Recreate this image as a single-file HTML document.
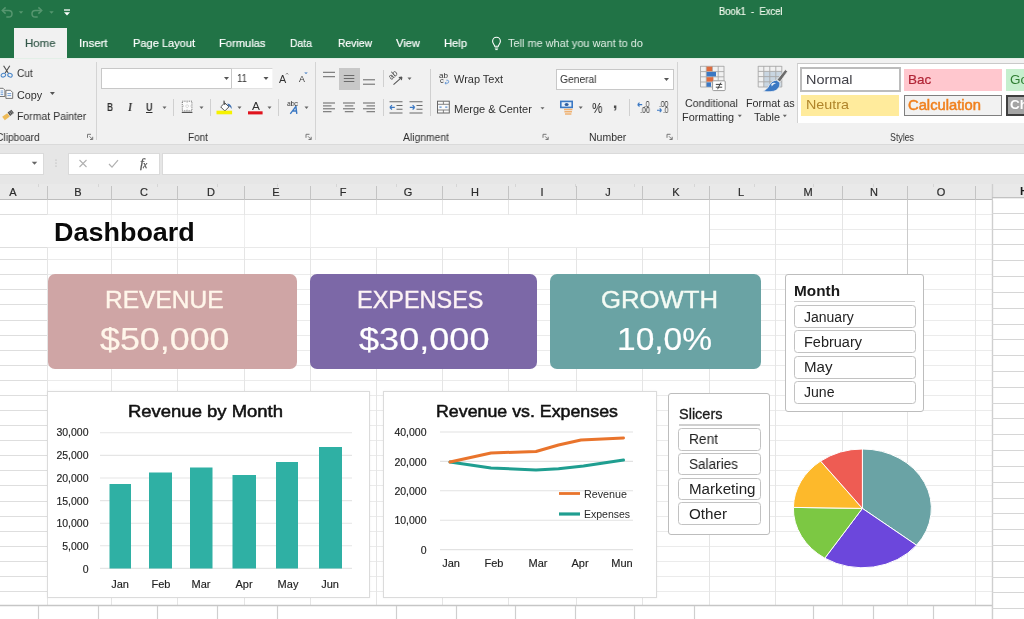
<!DOCTYPE html>
<html lang="en">
<head>
<meta charset="utf-8">
<title>Book1 - Excel</title>
<style>
html,body{margin:0;padding:0;background:#fff;}
body{width:1024px;height:619px;overflow:hidden;font-family:"Liberation Sans",sans-serif;}
#app{position:relative;width:1024px;height:619px;overflow:hidden;background:#fff;}
#app div,#app span,#app svg{position:absolute;box-sizing:border-box;}
.t{white-space:pre;transform-origin:0 50%;will-change:transform;}
.hdr{left:0;top:0;width:1024px;height:58px;background:#217346;}
.tab{left:14px;top:28.4px;width:52.6px;height:31px;background:#f1f1f1;}
.rib{left:0;top:58px;width:1024px;height:87px;background:#f1f1f1;border-top:1px solid #e3efe7;}
.fbar{left:0;top:144px;width:1024px;height:56px;background:#e6e6e6;border-top:1px solid #dadada;}
.wbox{background:#fff;border:1px solid #c8c8c8;}
.vsep{width:1px;background:#d4d4d4;}
.colh{left:0;top:184px;width:1024px;height:16px;background:#e9e9e9;border-bottom:1px solid #bdbdbd;}
.card{border-radius:7px;}
.chart{background:#fff;border:1px solid #dbdbdb;box-shadow:0 0 2px rgba(0,0,0,.06);}
.slc{background:#fff;border:1px solid #bdbdbd;border-radius:3px;}
.sli{background:#fff;border:1px solid #c2c2c2;border-radius:3.5px;}

</style>
</head>
<body>
<div id="app">
<div class="hdr"></div>
<div class="tab"></div>
<div class="rib"></div>
<div class="fbar"></div>
<div class="colh"></div>
<svg style="left:0;top:0" width="1024" height="619" viewBox="0 0 1024 619"><line x1="0" y1="214.5" x2="47.5" y2="214.5" stroke="#dedede" stroke-width="1"/><line x1="47.5" y1="214.5" x2="992" y2="214.5" stroke="#ebebeb" stroke-width="1"/><line x1="0" y1="229.5" x2="47.5" y2="229.5" stroke="#dedede" stroke-width="1"/><line x1="47.5" y1="229.5" x2="992" y2="229.5" stroke="#ebebeb" stroke-width="1"/><line x1="0" y1="244.5" x2="47.5" y2="244.5" stroke="#dedede" stroke-width="1"/><line x1="47.5" y1="244.5" x2="992" y2="244.5" stroke="#ebebeb" stroke-width="1"/><line x1="0" y1="259.5" x2="47.5" y2="259.5" stroke="#dedede" stroke-width="1"/><line x1="47.5" y1="259.5" x2="992" y2="259.5" stroke="#ebebeb" stroke-width="1"/><line x1="0" y1="274.5" x2="47.5" y2="274.5" stroke="#dedede" stroke-width="1"/><line x1="47.5" y1="274.5" x2="992" y2="274.5" stroke="#ebebeb" stroke-width="1"/><line x1="0" y1="289.5" x2="47.5" y2="289.5" stroke="#dedede" stroke-width="1"/><line x1="47.5" y1="289.5" x2="992" y2="289.5" stroke="#ebebeb" stroke-width="1"/><line x1="0" y1="304.5" x2="47.5" y2="304.5" stroke="#dedede" stroke-width="1"/><line x1="47.5" y1="304.5" x2="992" y2="304.5" stroke="#ebebeb" stroke-width="1"/><line x1="0" y1="320.5" x2="47.5" y2="320.5" stroke="#dedede" stroke-width="1"/><line x1="47.5" y1="320.5" x2="992" y2="320.5" stroke="#ebebeb" stroke-width="1"/><line x1="0" y1="335.5" x2="47.5" y2="335.5" stroke="#dedede" stroke-width="1"/><line x1="47.5" y1="335.5" x2="992" y2="335.5" stroke="#ebebeb" stroke-width="1"/><line x1="0" y1="350.5" x2="47.5" y2="350.5" stroke="#dedede" stroke-width="1"/><line x1="47.5" y1="350.5" x2="992" y2="350.5" stroke="#ebebeb" stroke-width="1"/><line x1="0" y1="365.5" x2="47.5" y2="365.5" stroke="#dedede" stroke-width="1"/><line x1="47.5" y1="365.5" x2="992" y2="365.5" stroke="#ebebeb" stroke-width="1"/><line x1="0" y1="380.5" x2="47.5" y2="380.5" stroke="#dedede" stroke-width="1"/><line x1="47.5" y1="380.5" x2="992" y2="380.5" stroke="#ebebeb" stroke-width="1"/><line x1="0" y1="395.5" x2="47.5" y2="395.5" stroke="#dedede" stroke-width="1"/><line x1="47.5" y1="395.5" x2="992" y2="395.5" stroke="#ebebeb" stroke-width="1"/><line x1="0" y1="410.5" x2="47.5" y2="410.5" stroke="#dedede" stroke-width="1"/><line x1="47.5" y1="410.5" x2="992" y2="410.5" stroke="#ebebeb" stroke-width="1"/><line x1="0" y1="425.5" x2="47.5" y2="425.5" stroke="#dedede" stroke-width="1"/><line x1="47.5" y1="425.5" x2="992" y2="425.5" stroke="#ebebeb" stroke-width="1"/><line x1="0" y1="440.5" x2="47.5" y2="440.5" stroke="#dedede" stroke-width="1"/><line x1="47.5" y1="440.5" x2="992" y2="440.5" stroke="#ebebeb" stroke-width="1"/><line x1="0" y1="455.5" x2="47.5" y2="455.5" stroke="#dedede" stroke-width="1"/><line x1="47.5" y1="455.5" x2="992" y2="455.5" stroke="#ebebeb" stroke-width="1"/><line x1="0" y1="470.5" x2="47.5" y2="470.5" stroke="#dedede" stroke-width="1"/><line x1="47.5" y1="470.5" x2="992" y2="470.5" stroke="#ebebeb" stroke-width="1"/><line x1="0" y1="485.5" x2="47.5" y2="485.5" stroke="#dedede" stroke-width="1"/><line x1="47.5" y1="485.5" x2="992" y2="485.5" stroke="#ebebeb" stroke-width="1"/><line x1="0" y1="501.5" x2="47.5" y2="501.5" stroke="#dedede" stroke-width="1"/><line x1="47.5" y1="501.5" x2="992" y2="501.5" stroke="#ebebeb" stroke-width="1"/><line x1="0" y1="516.5" x2="47.5" y2="516.5" stroke="#dedede" stroke-width="1"/><line x1="47.5" y1="516.5" x2="992" y2="516.5" stroke="#ebebeb" stroke-width="1"/><line x1="0" y1="531.5" x2="47.5" y2="531.5" stroke="#dedede" stroke-width="1"/><line x1="47.5" y1="531.5" x2="992" y2="531.5" stroke="#ebebeb" stroke-width="1"/><line x1="0" y1="546.5" x2="47.5" y2="546.5" stroke="#dedede" stroke-width="1"/><line x1="47.5" y1="546.5" x2="992" y2="546.5" stroke="#ebebeb" stroke-width="1"/><line x1="0" y1="561.5" x2="47.5" y2="561.5" stroke="#dedede" stroke-width="1"/><line x1="47.5" y1="561.5" x2="992" y2="561.5" stroke="#ebebeb" stroke-width="1"/><line x1="0" y1="576.5" x2="47.5" y2="576.5" stroke="#dedede" stroke-width="1"/><line x1="47.5" y1="576.5" x2="992" y2="576.5" stroke="#ebebeb" stroke-width="1"/><line x1="0" y1="591.5" x2="47.5" y2="591.5" stroke="#dedede" stroke-width="1"/><line x1="47.5" y1="591.5" x2="992" y2="591.5" stroke="#ebebeb" stroke-width="1"/><line x1="47.5" y1="200" x2="47.5" y2="605" stroke="#e5e5e5" stroke-width="1"/><line x1="111.5" y1="200" x2="111.5" y2="605" stroke="#e5e5e5" stroke-width="1"/><line x1="177.5" y1="200" x2="177.5" y2="605" stroke="#e5e5e5" stroke-width="1"/><line x1="244.5" y1="200" x2="244.5" y2="605" stroke="#e5e5e5" stroke-width="1"/><line x1="310.5" y1="200" x2="310.5" y2="605" stroke="#e5e5e5" stroke-width="1"/><line x1="376.5" y1="200" x2="376.5" y2="605" stroke="#e5e5e5" stroke-width="1"/><line x1="442.5" y1="200" x2="442.5" y2="605" stroke="#e5e5e5" stroke-width="1"/><line x1="508.5" y1="200" x2="508.5" y2="605" stroke="#e5e5e5" stroke-width="1"/><line x1="576.5" y1="200" x2="576.5" y2="605" stroke="#e5e5e5" stroke-width="1"/><line x1="642.5" y1="200" x2="642.5" y2="605" stroke="#e5e5e5" stroke-width="1"/><line x1="709.5" y1="200" x2="709.5" y2="605" stroke="#e5e5e5" stroke-width="1"/><line x1="775.5" y1="200" x2="775.5" y2="605" stroke="#e5e5e5" stroke-width="1"/><line x1="842.5" y1="200" x2="842.5" y2="605" stroke="#e5e5e5" stroke-width="1"/><line x1="907.5" y1="200" x2="907.5" y2="605" stroke="#e5e5e5" stroke-width="1"/><line x1="975.5" y1="200" x2="975.5" y2="605" stroke="#e5e5e5" stroke-width="1"/><rect x="0" y="215" width="709" height="32" fill="#fff"/><line x1="0" y1="247.5" x2="47.5" y2="247.5" stroke="#dedede" stroke-width="1"/><line x1="47.5" y1="247.5" x2="709" y2="247.5" stroke="#e9e9e9" stroke-width="1"/><line x1="111.5" y1="215" x2="111.5" y2="247" stroke="#eeeeee" stroke-width="1"/><line x1="177.5" y1="215" x2="177.5" y2="247" stroke="#eeeeee" stroke-width="1"/><line x1="244.5" y1="215" x2="244.5" y2="247" stroke="#eeeeee" stroke-width="1"/><line x1="310.5" y1="215" x2="310.5" y2="247" stroke="#eeeeee" stroke-width="1"/><line x1="38.5" y1="184" x2="38.5" y2="187" stroke="#d6d6d6" stroke-width="1"/><line x1="98.5" y1="184" x2="98.5" y2="187" stroke="#d6d6d6" stroke-width="1"/><line x1="157.5" y1="184" x2="157.5" y2="187" stroke="#d6d6d6" stroke-width="1"/><line x1="217.5" y1="184" x2="217.5" y2="187" stroke="#d6d6d6" stroke-width="1"/><line x1="277.5" y1="184" x2="277.5" y2="187" stroke="#d6d6d6" stroke-width="1"/><line x1="336.5" y1="184" x2="336.5" y2="187" stroke="#d6d6d6" stroke-width="1"/><line x1="396.5" y1="184" x2="396.5" y2="187" stroke="#d6d6d6" stroke-width="1"/><line x1="456.5" y1="184" x2="456.5" y2="187" stroke="#d6d6d6" stroke-width="1"/><line x1="515.5" y1="184" x2="515.5" y2="187" stroke="#d6d6d6" stroke-width="1"/><line x1="575.5" y1="184" x2="575.5" y2="187" stroke="#d6d6d6" stroke-width="1"/><line x1="634.5" y1="184" x2="634.5" y2="187" stroke="#d6d6d6" stroke-width="1"/><line x1="694.5" y1="184" x2="694.5" y2="187" stroke="#d6d6d6" stroke-width="1"/><line x1="754.5" y1="184" x2="754.5" y2="187" stroke="#d6d6d6" stroke-width="1"/><line x1="813.5" y1="184" x2="813.5" y2="187" stroke="#d6d6d6" stroke-width="1"/><line x1="873.5" y1="184" x2="873.5" y2="187" stroke="#d6d6d6" stroke-width="1"/><line x1="933.5" y1="184" x2="933.5" y2="187" stroke="#d6d6d6" stroke-width="1"/><line x1="992.5" y1="184" x2="992.5" y2="187" stroke="#d6d6d6" stroke-width="1"/><line x1="47.5" y1="186" x2="47.5" y2="200" stroke="#c4c4c4" stroke-width="1"/><line x1="111.5" y1="186" x2="111.5" y2="200" stroke="#c4c4c4" stroke-width="1"/><line x1="177.5" y1="186" x2="177.5" y2="200" stroke="#c4c4c4" stroke-width="1"/><line x1="244.5" y1="186" x2="244.5" y2="200" stroke="#c4c4c4" stroke-width="1"/><line x1="310.5" y1="186" x2="310.5" y2="200" stroke="#c4c4c4" stroke-width="1"/><line x1="376.5" y1="186" x2="376.5" y2="200" stroke="#c4c4c4" stroke-width="1"/><line x1="442.5" y1="186" x2="442.5" y2="200" stroke="#c4c4c4" stroke-width="1"/><line x1="508.5" y1="186" x2="508.5" y2="200" stroke="#c4c4c4" stroke-width="1"/><line x1="576.5" y1="186" x2="576.5" y2="200" stroke="#c4c4c4" stroke-width="1"/><line x1="642.5" y1="186" x2="642.5" y2="200" stroke="#c4c4c4" stroke-width="1"/><line x1="709.5" y1="186" x2="709.5" y2="200" stroke="#c4c4c4" stroke-width="1"/><line x1="775.5" y1="186" x2="775.5" y2="200" stroke="#c4c4c4" stroke-width="1"/><line x1="842.5" y1="186" x2="842.5" y2="200" stroke="#c4c4c4" stroke-width="1"/><line x1="907.5" y1="186" x2="907.5" y2="200" stroke="#c4c4c4" stroke-width="1"/><line x1="975.5" y1="186" x2="975.5" y2="200" stroke="#c4c4c4" stroke-width="1"/><line x1="907.5" y1="200" x2="907.5" y2="274" stroke="#cbcbcb" stroke-width="1"/><line x1="709.5" y1="200" x2="709.5" y2="274" stroke="#d6d6d6" stroke-width="1"/><line x1="0" y1="605.5" x2="992" y2="605.5" stroke="#c6c6c6" stroke-width="1.4"/><line x1="38.5" y1="606" x2="38.5" y2="619" stroke="#cfcfcf" stroke-width="1.2"/><line x1="98.5" y1="606" x2="98.5" y2="619" stroke="#cfcfcf" stroke-width="1.2"/><line x1="157.5" y1="606" x2="157.5" y2="619" stroke="#cfcfcf" stroke-width="1.2"/><line x1="217.5" y1="606" x2="217.5" y2="619" stroke="#cfcfcf" stroke-width="1.2"/><line x1="277.5" y1="606" x2="277.5" y2="619" stroke="#cfcfcf" stroke-width="1.2"/><line x1="396.5" y1="606" x2="396.5" y2="619" stroke="#cfcfcf" stroke-width="1.2"/><line x1="456.5" y1="606" x2="456.5" y2="619" stroke="#cfcfcf" stroke-width="1.2"/><line x1="515.5" y1="606" x2="515.5" y2="619" stroke="#cfcfcf" stroke-width="1.2"/><line x1="575.5" y1="606" x2="575.5" y2="619" stroke="#cfcfcf" stroke-width="1.2"/><line x1="634.5" y1="606" x2="634.5" y2="619" stroke="#cfcfcf" stroke-width="1.2"/><line x1="694.5" y1="606" x2="694.5" y2="619" stroke="#cfcfcf" stroke-width="1.2"/><line x1="813.5" y1="606" x2="813.5" y2="619" stroke="#cfcfcf" stroke-width="1.2"/><line x1="873.5" y1="606" x2="873.5" y2="619" stroke="#cfcfcf" stroke-width="1.2"/><line x1="933.5" y1="606" x2="933.5" y2="619" stroke="#cfcfcf" stroke-width="1.2"/><line x1="992.5" y1="606" x2="992.5" y2="619" stroke="#cfcfcf" stroke-width="1.2"/><rect x="992" y="200" width="32" height="419" fill="#fff"/><line x1="992.5" y1="184" x2="992.5" y2="619" stroke="#cfcfcf" stroke-width="1.4"/><line x1="992" y1="197.5" x2="1024" y2="197.5" stroke="#d6d6d6" stroke-width="1"/><line x1="992" y1="213.5" x2="1024" y2="213.5" stroke="#d6d6d6" stroke-width="1"/><line x1="992" y1="229.5" x2="1024" y2="229.5" stroke="#d6d6d6" stroke-width="1"/><line x1="992" y1="244.5" x2="1024" y2="244.5" stroke="#d6d6d6" stroke-width="1"/><line x1="992" y1="260.5" x2="1024" y2="260.5" stroke="#d6d6d6" stroke-width="1"/><line x1="992" y1="276.5" x2="1024" y2="276.5" stroke="#d6d6d6" stroke-width="1"/><line x1="992" y1="292.5" x2="1024" y2="292.5" stroke="#d6d6d6" stroke-width="1"/><line x1="992" y1="308.5" x2="1024" y2="308.5" stroke="#d6d6d6" stroke-width="1"/><line x1="992" y1="324.5" x2="1024" y2="324.5" stroke="#d6d6d6" stroke-width="1"/><line x1="992" y1="339.5" x2="1024" y2="339.5" stroke="#d6d6d6" stroke-width="1"/><line x1="992" y1="355.5" x2="1024" y2="355.5" stroke="#d6d6d6" stroke-width="1"/><line x1="992" y1="371.5" x2="1024" y2="371.5" stroke="#d6d6d6" stroke-width="1"/><line x1="992" y1="387.5" x2="1024" y2="387.5" stroke="#d6d6d6" stroke-width="1"/><line x1="992" y1="403.5" x2="1024" y2="403.5" stroke="#d6d6d6" stroke-width="1"/><line x1="992" y1="418.5" x2="1024" y2="418.5" stroke="#d6d6d6" stroke-width="1"/><line x1="992" y1="434.5" x2="1024" y2="434.5" stroke="#d6d6d6" stroke-width="1"/><line x1="992" y1="450.5" x2="1024" y2="450.5" stroke="#d6d6d6" stroke-width="1"/><line x1="992" y1="466.5" x2="1024" y2="466.5" stroke="#d6d6d6" stroke-width="1"/><line x1="992" y1="482.5" x2="1024" y2="482.5" stroke="#d6d6d6" stroke-width="1"/><line x1="992" y1="498.5" x2="1024" y2="498.5" stroke="#d6d6d6" stroke-width="1"/><line x1="992" y1="513.5" x2="1024" y2="513.5" stroke="#d6d6d6" stroke-width="1"/><line x1="992" y1="529.5" x2="1024" y2="529.5" stroke="#d6d6d6" stroke-width="1"/><line x1="992" y1="545.5" x2="1024" y2="545.5" stroke="#d6d6d6" stroke-width="1"/><line x1="992" y1="561.5" x2="1024" y2="561.5" stroke="#d6d6d6" stroke-width="1"/><line x1="992" y1="577.5" x2="1024" y2="577.5" stroke="#d6d6d6" stroke-width="1"/><line x1="992" y1="592.5" x2="1024" y2="592.5" stroke="#d6d6d6" stroke-width="1"/><line x1="992" y1="608.5" x2="1024" y2="608.5" stroke="#d6d6d6" stroke-width="1"/><rect x="993" y="198" width="31" height="2.5" fill="#fff"/><line x1="992" y1="197.7" x2="1024" y2="197.7" stroke="#c0c0c0" stroke-width="1.2"/></svg>
<div class="card" style="left:48px;top:274px;width:249px;height:95px;background:#cfa5a5"></div>
<div class="card" style="left:310px;top:274px;width:227px;height:95px;background:#7c68a7"></div>
<div class="card" style="left:550px;top:274px;width:211px;height:95px;background:#6aa3a4"></div>
<div class="slc" style="left:785px;top:274px;width:139px;height:138px"></div>
<div style="left:794px;top:300.8px;width:121px;height:1.6px;background:#cfcfcf"></div>
<div class="sli" style="left:794px;top:304.6px;width:122px;height:23.2px"></div>
<div class="sli" style="left:794px;top:330.1px;width:122px;height:23.2px"></div>
<div class="sli" style="left:794px;top:355.5px;width:122px;height:23.2px"></div>
<div class="sli" style="left:794px;top:380.9px;width:122px;height:23.2px"></div>
<div class="slc" style="left:668px;top:393px;width:102px;height:142px"></div>
<div style="left:679px;top:424.2px;width:81px;height:1.6px;background:#cfcfcf"></div>
<div class="sli" style="left:678px;top:428px;width:83px;height:22.5px"></div>
<div class="sli" style="left:678px;top:452.5px;width:83px;height:22.5px"></div>
<div class="sli" style="left:678px;top:477.5px;width:83px;height:22.5px"></div>
<div class="sli" style="left:678px;top:502px;width:83px;height:22.5px"></div>
<div class="chart" style="left:47px;top:391px;width:323px;height:207px"></div>
<svg style="left:0;top:0" width="1024" height="619" viewBox="0 0 1024 619"><line x1="100" y1="432.8" x2="352" y2="432.8" stroke="#e5e5e5" stroke-width="1.1"/><line x1="100" y1="455.4" x2="352" y2="455.4" stroke="#e5e5e5" stroke-width="1.1"/><line x1="100" y1="478.0" x2="352" y2="478.0" stroke="#e5e5e5" stroke-width="1.1"/><line x1="100" y1="500.6" x2="352" y2="500.6" stroke="#e5e5e5" stroke-width="1.1"/><line x1="100" y1="523.2" x2="352" y2="523.2" stroke="#e5e5e5" stroke-width="1.1"/><line x1="100" y1="545.8" x2="352" y2="545.8" stroke="#e5e5e5" stroke-width="1.1"/><line x1="100" y1="568.4" x2="352" y2="568.4" stroke="#e5e5e5" stroke-width="1.1"/><rect x="109.5" y="484" width="21.5" height="84.5" fill="#2fb0a4"/><rect x="149" y="472.5" width="23" height="96.0" fill="#2fb0a4"/><rect x="190" y="467.5" width="22.5" height="101.0" fill="#2fb0a4"/><rect x="232.5" y="475" width="23.5" height="93.5" fill="#2fb0a4"/><rect x="276" y="462" width="22" height="106.5" fill="#2fb0a4"/><rect x="319" y="447" width="23" height="121.5" fill="#2fb0a4"/></svg>
<div class="chart" style="left:383px;top:391px;width:274px;height:207px"></div>
<svg style="left:0;top:0" width="1024" height="619" viewBox="0 0 1024 619"><line x1="440" y1="432.0" x2="633" y2="432.0" stroke="#e2e2e2" stroke-width="1.1"/><line x1="440" y1="461.4" x2="633" y2="461.4" stroke="#e2e2e2" stroke-width="1.1"/><line x1="440" y1="490.8" x2="633" y2="490.8" stroke="#e2e2e2" stroke-width="1.1"/><line x1="440" y1="520.2" x2="633" y2="520.2" stroke="#e2e2e2" stroke-width="1.1"/><line x1="440" y1="549.6" x2="633" y2="549.6" stroke="#e2e2e2" stroke-width="1.1"/><polyline points="450,462 491,468 536,470 558.5,468.8 583.5,466 623.5,460" fill="none" stroke="#1f9e90" stroke-width="3" stroke-linejoin="round" stroke-linecap="round"/><polyline points="450,462 491,453 536,451.5 558.5,445 581,440 623.5,438" fill="none" stroke="#e9742c" stroke-width="3" stroke-linejoin="round" stroke-linecap="round"/><line x1="559" y1="493.5" x2="580" y2="493.5" stroke="#e9742c" stroke-width="2.8"/><line x1="559" y1="514" x2="580" y2="514" stroke="#1f9e90" stroke-width="3.2"/></svg>
<svg style="left:0;top:0" width="1024" height="619" viewBox="0 0 1024 619"><path d="M862.4,508.4 L862.4,449.0 A69,59.4 0 0 1 916.5,545.2 Z" fill="#6aa3a5" stroke="#fff" stroke-width="1" stroke-linejoin="round"/><path d="M862.4,508.4 L916.5,545.2 A69,59.4 0 0 1 824.8,558.2 Z" fill="#6c47dc" stroke="#fff" stroke-width="1" stroke-linejoin="round"/><path d="M862.4,508.4 L824.8,558.2 A69,59.4 0 0 1 793.4,507.4 Z" fill="#7cc843" stroke="#fff" stroke-width="1" stroke-linejoin="round"/><path d="M862.4,508.4 L793.4,507.4 A69,59.4 0 0 1 820.6,461.1 Z" fill="#fdb92b" stroke="#fff" stroke-width="1" stroke-linejoin="round"/><path d="M862.4,508.4 L820.6,461.1 A69,59.4 0 0 1 862.4,449.0 Z" fill="#ee5c53" stroke="#fff" stroke-width="1" stroke-linejoin="round"/></svg>
<div class="vsep" style="left:96px;top:62px;height:78px"></div>
<div class="vsep" style="left:315px;top:62px;height:78px"></div>
<div class="vsep" style="left:677px;top:62px;height:78px"></div>
<div class="vsep" style="left:173px;top:99px;height:17px;background:#d0d0d0"></div>
<div class="vsep" style="left:210px;top:99px;height:17px;background:#d0d0d0"></div>
<div class="vsep" style="left:278px;top:99px;height:17px;background:#d0d0d0"></div>
<div class="vsep" style="left:383px;top:70px;height:17px;background:#d0d0d0"></div>
<div class="vsep" style="left:383px;top:99px;height:17px;background:#d0d0d0"></div>
<div class="vsep" style="left:629px;top:99px;height:17px;background:#d0d0d0"></div>
<div class="vsep" style="left:430px;top:69px;height:47px;background:#d0d0d0"></div>
<div class="wbox" style="left:101px;top:68px;width:131px;height:21px"></div>
<div class="wbox" style="left:231px;top:68px;width:42px;height:21px;border-color:#d6d6d6 #f6f6f6 #e2e2e2 #c8c8c8"></div>
<div class="wbox" style="left:556px;top:69px;width:118px;height:21px"></div>
<div style="left:339px;top:68px;width:21px;height:22px;background:#c8c8c8"></div>
<div style="left:797px;top:62.5px;width:227px;height:60.5px;background:#fff;border-left:1px solid #d2d2d2;border-top:1px solid #c9c9c9"></div>
<div style="left:800px;top:67px;width:101px;height:25px;background:#fff;border:2px solid #bcbcbc"></div>
<div style="left:904px;top:69px;width:98px;height:22px;background:#ffc7ce"></div>
<div style="left:1006px;top:69px;width:30px;height:22px;background:#c6efce"></div>
<div style="left:801px;top:95px;width:98px;height:21px;background:#ffeb9c"></div>
<div style="left:904px;top:95px;width:98px;height:21px;background:#f2f2f2;border:1px solid #7f7f7f"></div>
<div style="left:1006px;top:95px;width:30px;height:21px;background:#a5a5a5;border:2px solid #3f3f3f"></div>
<div class="wbox" style="left:-2px;top:153px;width:46px;height:22px;border-color:#dadada"></div>
<div class="wbox" style="left:68px;top:153px;width:92px;height:22px;border-color:#dadada"></div>
<div class="wbox" style="left:162px;top:153px;width:870px;height:22px;border-color:#dadada"></div>
<svg style="left:0;top:0;will-change:transform" width="1024" height="619" viewBox="0 0 1024 619" fill="none"><path d="M2.5,10.5 h6.2 a3.3,3.3 0 0 1 0,6.6 h-2.4" stroke="#56966f" stroke-width="1.5"/><path d="M5.6,7.4 l-3.3,3.1 l3.3,3.1" stroke="#56966f" stroke-width="1.5"/><path d="M18.75,11.2 h4.5 l-2.25,2.6 z" fill="#56966f"/><path d="M41.5,10.5 h-6.2 a3.3,3.3 0 0 0 0,6.6 h2.4" stroke="#56966f" stroke-width="1.5"/><path d="M38.4,7.4 l3.3,3.1 l-3.3,3.1" stroke="#56966f" stroke-width="1.5"/><path d="M49.25,11.2 h4.5 l-2.25,2.6 z" fill="#56966f"/><path d="M64,10 h6" stroke="#fff" stroke-width="1.3"/><path d="M64,12.3 h6 l-3,3.2 z" fill="#fff"/><path d="M494.6,46.2 c0,-1.6 -2,-2.6 -2,-5 a3.9,3.9 0 0 1 7.8,0 c0,2.4 -2,3.4 -2,5 z" stroke="#fff" stroke-width="1.1"/><path d="M494.8,48 h3.4 M495.3,49.6 h2.4" stroke="#fff" stroke-width="1"/><path d="M3.6,65.8 l4.6,7.2 M9.8,65.8 l-4.6,7.2" stroke="#505050" stroke-width="1.15"/><ellipse cx="3.4" cy="75.2" rx="2.3" ry="1.8" transform="rotate(-25 3.4 75.2)" stroke="#4a86c8" stroke-width="1.05"/><ellipse cx="10" cy="75.2" rx="2.3" ry="1.8" transform="rotate(25 10 75.2)" stroke="#4a86c8" stroke-width="1.05"/><path d="M-0.5,88.3 h3.6 l1.8,1.8 v6.4 h-5.4 z" stroke="#666" stroke-width="0.9" fill="#fafafa"/><path d="M5.9,90.3 h4.6 l2.2,2.2 v5.9 h-6.8 z" stroke="#666" stroke-width="0.9" fill="#fafafa"/><path d="M0.6,91 h2.6 M0.6,92.8 h2.6 M0.6,94.6 h2.6 M7.4,93.6 h3.8 M7.4,95.6 h3.8" stroke="#5b8fd0" stroke-width="0.85"/><path d="M49.9,92.1 h5 l-2.5,3 z" fill="#555"/><path d="M2.2,116.8 l5,-3.6 l2.6,3.4 l-5,3.6 z" fill="#eebb58"/><path d="M7.6,112.6 l3.8,-2.8 l2.5,3.3 l-3.8,2.8 z" fill="#4f4f4f"/><path d="M9.1,111.6 l2.4,3.3 M10.5,110.6 l2.4,3.3" stroke="#bdbdbd" stroke-width="0.6"/><path d="M87.5,137.8 v-3.5 h3.5" stroke="#777" stroke-width="1"/><path d="M89.5,136.3 l3,3 M92.7,136.8 v2.7 h-2.7" stroke="#777" stroke-width="1"/><path d="M224.0,77.0 h5 l-2.5,3 z" fill="#555"/><path d="M263.5,77.0 h5 l-2.5,3 z" fill="#555"/><path d="M162.5,106.6 h4 l-2.0,2.4 z" fill="#666"/><path d="M199.5,106.6 h4 l-2.0,2.4 z" fill="#666"/><path d="M237.5,106.6 h4 l-2.0,2.4 z" fill="#666"/><path d="M267.5,106.6 h4 l-2.0,2.4 z" fill="#666"/><path d="M304.5,106.6 h4 l-2.0,2.4 z" fill="#666"/><rect x="182.3" y="101.2" width="9.6" height="9.6" fill="#fbfbfb" stroke="#666" stroke-width="1" stroke-dasharray="1 1.15"/><path d="M187.1,102 v8.6 M183,106 h8.4" stroke="#aaa" stroke-width="0.8" stroke-dasharray="0.9 1.6"/><path d="M181.8,112.4 h10.6" stroke="#555" stroke-width="1.2"/><path d="M224.8,102.8 l4.1,4.1 l-4.1,4.1 l-4.1,-4.1 z" stroke="#555" stroke-width="1" fill="#fdfdfd" stroke-linejoin="round"/><path d="M224.1,100.6 c-0.4,1.6 0.2,3 0.8,4.2" stroke="#555" stroke-width="1.3"/><path d="M227.2,103.4 c2.8,0.3 4.8,2.2 4.6,5.6 c-1,-1.8 -2.2,-2.6 -3.4,-2.8 z" fill="#3f6fb0"/><rect x="216.5" y="110.7" width="15.6" height="3.6" fill="#f6f200"/><rect x="248" y="111.3" width="14.6" height="3.1" fill="#e0131d"/><path d="M290.3,113.8 l5.6,-7.4 l0.9,7.4 M292.6,111 h3.8" stroke="#3b78c3" stroke-width="1.4" stroke-linejoin="round"/><path d="M306.0,137.8 v-3.5 h3.5" stroke="#777" stroke-width="1"/><path d="M308.0,136.3 l3,3 M311.2,136.8 v2.7 h-2.7" stroke="#777" stroke-width="1"/><path d="M286,74.4 l1.1,-1.2 l1.1,1.2" stroke="#666" stroke-width="0.8"/><path d="M304.2,72.4 h3.6 l-1.8,1.7 z" fill="#3b78c3"/><path d="M323.0,72.3 h12" stroke="#6a6a6a" stroke-width="1.05"/><path d="M323.0,76.7 h12" stroke="#6a6a6a" stroke-width="1.05"/><path d="M343.8,75.5 h10.5" stroke="#6a6a6a" stroke-width="1.05"/><path d="M343.8,78.5 h10.5" stroke="#6a6a6a" stroke-width="1.05"/><path d="M343.8,81.5 h10.5" stroke="#6a6a6a" stroke-width="1.05"/><path d="M363.0,79.8 h12" stroke="#6a6a6a" stroke-width="1.05"/><path d="M363.0,84.2 h12" stroke="#6a6a6a" stroke-width="1.05"/><path d="M323.0,103.0 h12" stroke="#6a6a6a" stroke-width="1.05"/><path d="M323.0,105.9 h8.5" stroke="#6a6a6a" stroke-width="1.05"/><path d="M323.0,108.8 h12" stroke="#6a6a6a" stroke-width="1.05"/><path d="M323.0,111.7 h8.5" stroke="#6a6a6a" stroke-width="1.05"/><path d="M343.0,103.0 h12" stroke="#6a6a6a" stroke-width="1.05"/><path d="M344.8,105.9 h8.5" stroke="#6a6a6a" stroke-width="1.05"/><path d="M343.0,108.8 h12" stroke="#6a6a6a" stroke-width="1.05"/><path d="M344.8,111.7 h8.5" stroke="#6a6a6a" stroke-width="1.05"/><path d="M363.0,103.0 h12" stroke="#6a6a6a" stroke-width="1.05"/><path d="M366.5,105.9 h8.5" stroke="#6a6a6a" stroke-width="1.05"/><path d="M363.0,108.8 h12" stroke="#6a6a6a" stroke-width="1.05"/><path d="M366.5,111.7 h8.5" stroke="#6a6a6a" stroke-width="1.05"/><text transform="translate(391.3,80.2) rotate(-42)" font-family="Liberation Sans, sans-serif" font-size="8.5" fill="#444">ab</text><path d="M393.5,84.6 l8.2,-7.2 m0.3,-0.3 l-3.2,0.5 m3.2,-0.5 l-0.7,3.1" stroke="#555" stroke-width="1.1"/><path d="M407.5,77.6 h4 l-2.0,2.4 z" fill="#666"/><path d="M389.5,101.8 h13 M389.5,112.9 h13" stroke="#6a6a6a" stroke-width="1.05"/><path d="M396.5,105.5 h6 M396.5,109.2 h6" stroke="#6a6a6a" stroke-width="1.05"/><path d="M394.8,107.3 h-5 m0,0 l2.2,-2.2 m-2.2,2.2 l2.2,2.2" stroke="#3b78c3" stroke-width="1.2"/><path d="M409.5,101.8 h13 M409.5,112.9 h13" stroke="#6a6a6a" stroke-width="1.05"/><path d="M416.5,105.5 h6 M416.5,109.2 h6" stroke="#6a6a6a" stroke-width="1.05"/><path d="M409.8,107.3 h5 m0,0 l-2.2,-2.2 m2.2,2.2 l-2.2,2.2" stroke="#3b78c3" stroke-width="1.2"/><rect x="437.5" y="101.2" width="11.8" height="11.8" stroke="#666" stroke-width="1" fill="#fafafa"/><path d="M437.5,104.3 h11.8 M437.5,110 h11.8 M443.4,101.2 v3 M443.4,110 v3" stroke="#777" stroke-width="0.9"/><path d="M439.4,107.2 h2.2 M445.2,107.2 h2.2" stroke="#5b8fd0" stroke-width="1.3"/><path d="M540.5,107.2 h4 l-2.0,2.4 z" fill="#666"/><path d="M543.0,137.8 v-3.5 h3.5" stroke="#777" stroke-width="1"/><path d="M545.0,136.3 l3,3 M548.2,136.8 v2.7 h-2.7" stroke="#777" stroke-width="1"/><path d="M664.0,78.0 h5 l-2.5,3 z" fill="#555"/><rect x="560.8" y="101.4" width="11.4" height="6" stroke="#3b78c3" stroke-width="1.6" fill="#e8f0fa"/><ellipse cx="566.6" cy="104.4" rx="2" ry="1.5" fill="#2f5f9f"/><path d="M564,109.6 h8.4 M564.4,111.8 h7.6 M565,114 h6.4" stroke="#efb171" stroke-width="1.5"/><path d="M578.7,106.5 h4 l-2.0,2.4 z" fill="#666"/><path d="M642.2,104.6 h-4.6 m0,0 l1.9,-1.9 m-1.9,1.9 l1.9,1.9" stroke="#3b78c3" stroke-width="1.1"/><path d="M657,110.3 h4.6 m0,0 l-1.9,-1.9 m1.9,1.9 l-1.9,1.9" stroke="#3b78c3" stroke-width="1.1"/><path d="M667.0,137.8 v-3.5 h3.5" stroke="#777" stroke-width="1"/><path d="M669.0,136.3 l3,3 M672.2,136.8 v2.7 h-2.7" stroke="#777" stroke-width="1"/><path d="M700.5,66 v21 M706.3,66 v21 M712.3,66 v21 M718.2,66 v16 M724,66 v15 M700.5,66.3 h23.5 M700.5,71.6 h23.5 M700.5,76.8 h23.5 M700.5,82 h13 M700.5,87 h12" stroke="#a8a8a8" stroke-width="0.9"/><rect x="706.6" y="66.6" width="5.6" height="4.6" fill="#dd6b3e"/><rect x="706.6" y="72" width="9.4" height="4.4" fill="#3b78c3"/><rect x="706.6" y="77.2" width="6.8" height="4.4" fill="#dd6b3e"/><rect x="706.6" y="82.4" width="4.4" height="4.4" fill="#3b78c3"/><rect x="712.6" y="80.8" width="12.6" height="9.8" rx="1" fill="#fff" stroke="#9a9a9a" stroke-width="1"/><path d="M715.8,84.4 h6.4 M715.8,87.2 h6.4 M720.8,82.6 l-3.2,6.6" stroke="#444" stroke-width="1"/><path d="M737.8,114.8 h4 l-2.0,2.4 z" fill="#666"/><rect x="763.8" y="71.4" width="18" height="15.4" fill="#c9d6e2"/><path d="M758.2,66 v21 M763.8,66 v21 M769.8,66 v21 M775.8,66 v21 M781.8,66 v21 M758.2,66.3 h23.6 M758.2,71.4 h23.6 M758.2,76.6 h23.6 M758.2,81.8 h23.6 M758.2,87 h23.6" stroke="#a8a8a8" stroke-width="0.9"/><path d="M785.2,69.6 l2.4,1.8 l-7.6,10.6 l-3,-2.2 z" fill="#6b6b6b" stroke="#f1f1f1" stroke-width="0.8"/><path d="M776.6,80.2 l3.2,2.4 c0.6,3.4 -1.6,7.6 -6,8.6 c-3.6,0.8 -8,0.6 -11.6,0.4 c3.4,-1.2 5.4,-3.2 6.8,-6 c1.6,-3.2 4.2,-5.4 7.6,-5.4 z" fill="#3b78c3" stroke="#f1f1f1" stroke-width="0.8"/><path d="M771.2,84 c1.6,-1.6 3.6,-1.6 4.8,-0.6 c-1.8,0.2 -3.4,1.4 -4.2,3 z" fill="#fff" opacity="0.9"/><path d="M782.8,114.8 h4 l-2.0,2.4 z" fill="#666"/><path d="M445.2,83.2 h2 a1.5,1.5 0 0 0 0,-3 h-0.8" stroke="#5b8fd0" stroke-width="0.9"/><path d="M446.2,82 l-1.3,1.2 l1.3,1.2" stroke="#5b8fd0" stroke-width="0.9"/><path d="M31.75,161.7 h5.5 l-2.75,3 z" fill="#666"/><circle cx="56" cy="160" r="0.6" fill="#aaa"/><circle cx="56" cy="163" r="0.6" fill="#aaa"/><circle cx="56" cy="166" r="0.6" fill="#aaa"/><path d="M79.5,160 l7,7 M86.5,160 l-7,7" stroke="#b0b0b0" stroke-width="1.1"/><path d="M109,164 l3,3.2 l6,-7" stroke="#b0b0b0" stroke-width="1.2"/></svg>
<span class="t" style="left:718.5px;top:4.1px;font-size:10.5px;line-height:14px;color:#f0f8ec;transform:scaleX(0.899);-webkit-text-stroke:0.2px currentColor;">Book1  -  Excel</span>
<span class="t" style="left:24.5px;top:35.3px;font-size:11.6px;line-height:15px;color:#35594a;transform:scaleX(0.986);-webkit-text-stroke:0.2px currentColor;">Home</span>
<span class="t" style="left:79.0px;top:35.3px;font-size:11.6px;line-height:15px;color:#fff;transform:scaleX(0.983);-webkit-text-stroke:0.2px currentColor;">Insert</span>
<span class="t" style="left:132.5px;top:35.3px;font-size:11.6px;line-height:15px;color:#fff;transform:scaleX(0.952);-webkit-text-stroke:0.2px currentColor;">Page Layout</span>
<span class="t" style="left:219.0px;top:35.3px;font-size:11.6px;line-height:15px;color:#fff;transform:scaleX(0.962);-webkit-text-stroke:0.2px currentColor;">Formulas</span>
<span class="t" style="left:290.0px;top:35.3px;font-size:11.6px;line-height:15px;color:#fff;transform:scaleX(0.898);-webkit-text-stroke:0.2px currentColor;">Data</span>
<span class="t" style="left:338.0px;top:35.3px;font-size:11.6px;line-height:15px;color:#fff;transform:scaleX(0.894);-webkit-text-stroke:0.2px currentColor;">Review</span>
<span class="t" style="left:396.0px;top:35.3px;font-size:11.6px;line-height:15px;color:#fff;transform:scaleX(0.963);-webkit-text-stroke:0.2px currentColor;">View</span>
<span class="t" style="left:444.0px;top:35.3px;font-size:11.6px;line-height:15px;color:#fff;transform:scaleX(0.964);-webkit-text-stroke:0.2px currentColor;">Help</span>
<span class="t" style="left:508.0px;top:35.5px;font-size:11.2px;line-height:15px;color:#e4f0e8;transform:scaleX(0.978);">Tell me what you want to do</span>
<span class="t" style="left:16.7px;top:65.5px;font-size:10.8px;line-height:14px;color:#303030;transform:scaleX(0.940);">Cut</span>
<span class="t" style="left:16.7px;top:87.5px;font-size:10.8px;line-height:14px;color:#303030;transform:scaleX(1.003);">Copy</span>
<span class="t" style="left:16.7px;top:109.0px;font-size:10.8px;line-height:14px;color:#303030;transform:scaleX(0.971);">Format Painter</span>
<span class="t" style="left:-4.5px;top:129.8px;font-size:10.5px;line-height:14px;color:#303030;transform:scaleX(0.974);">Clipboard</span>
<span class="t" style="left:236.5px;top:71.0px;font-size:11.5px;line-height:15px;color:#303030;transform:scaleX(0.837);">11</span>
<span class="t" style="left:279.0px;top:71.9px;font-size:10.8px;line-height:14px;color:#303030;transform:scaleX(1.000);">A</span>
<span class="t" style="left:299.0px;top:74.1px;font-size:8.8px;line-height:11px;color:#303030;transform:scaleX(0.953);">A</span>
<span class="t" style="left:107.0px;top:100.2px;font-size:10.8px;line-height:14px;color:#303030;font-weight:700;transform:scaleX(0.768);">B</span>
<span class="t" style="left:127.5px;top:100.0px;font-size:11.5px;line-height:15px;color:#303030;font-weight:700;transform:scaleX(0.892);font-style:italic;font-family:'Liberation Serif',serif;">I</span>
<span class="t" style="left:146.0px;top:99.5px;font-size:11.5px;line-height:15px;color:#303030;font-weight:700;transform:scaleX(0.782);text-decoration:underline;">U</span>
<span class="t" style="left:251.8px;top:99.3px;font-size:11.3px;line-height:15px;color:#303030;transform:scaleX(1.047);">A</span>
<span class="t" style="left:286.7px;top:98.5px;font-size:8px;line-height:10px;color:#303030;transform:scaleX(0.814);">abc</span>
<span class="t" style="left:188.0px;top:129.8px;font-size:10.5px;line-height:14px;color:#303030;transform:scaleX(0.952);">Font</span>
<span class="t" style="left:439.4px;top:70.6px;font-size:8px;line-height:10px;color:#303030;transform:scaleX(0.966);">ab</span>
<span class="t" style="left:439.6px;top:76.4px;font-size:7.5px;line-height:10px;color:#303030;transform:scaleX(0.960);">c</span>
<span class="t" style="left:453.5px;top:72.3px;font-size:10.8px;line-height:14px;color:#303030;transform:scaleX(1.016);">Wrap Text</span>
<span class="t" style="left:453.5px;top:101.5px;font-size:10.8px;line-height:14px;color:#303030;transform:scaleX(1.021);">Merge &amp; Center</span>
<span class="t" style="left:403.0px;top:129.8px;font-size:10.5px;line-height:14px;color:#303030;transform:scaleX(0.985);">Alignment</span>
<span class="t" style="left:559.5px;top:72.3px;font-size:10.8px;line-height:14px;color:#303030;transform:scaleX(0.950);">General</span>
<span class="t" style="left:591.5px;top:97.5px;font-size:15px;line-height:20px;color:#303030;transform:scaleX(0.787);">%</span>
<span class="t" style="left:613.3px;top:91.8px;font-size:17px;line-height:22px;color:#303030;font-weight:700;transform:scaleX(0.866);">,</span>
<span class="t" style="left:644.0px;top:98.6px;font-size:8.5px;line-height:11px;color:#303030;transform:scaleX(0.775);">.0</span>
<span class="t" style="left:639.5px;top:104.5px;font-size:8.5px;line-height:11px;color:#303030;transform:scaleX(0.845);">.00</span>
<span class="t" style="left:659.3px;top:98.6px;font-size:8.5px;line-height:11px;color:#303030;transform:scaleX(0.786);">.00</span>
<span class="t" style="left:663.2px;top:104.5px;font-size:8.5px;line-height:11px;color:#303030;transform:scaleX(0.761);">.0</span>
<span class="t" style="left:589.0px;top:129.8px;font-size:10.5px;line-height:14px;color:#303030;transform:scaleX(0.990);">Number</span>
<span class="t" style="left:685.0px;top:96.0px;font-size:10.8px;line-height:14px;color:#303030;transform:scaleX(0.981);">Conditional</span>
<span class="t" style="left:682.0px;top:110.0px;font-size:10.8px;line-height:14px;color:#303030;transform:scaleX(1.008);">Formatting</span>
<span class="t" style="left:745.7px;top:96.0px;font-size:10.8px;line-height:14px;color:#303030;transform:scaleX(0.994);">Format as</span>
<span class="t" style="left:754.0px;top:110.0px;font-size:10.8px;line-height:14px;color:#303030;transform:scaleX(1.007);">Table</span>
<span class="t" style="left:805.5px;top:70.5px;font-size:13.5px;line-height:18px;color:#3f3f46;transform:scaleX(1.069);">Normal</span>
<span class="t" style="left:907.5px;top:70.5px;font-size:13.5px;line-height:18px;color:#b02335;transform:scaleX(0.989);-webkit-text-stroke:0.2px #b02335;">Bac</span>
<span class="t" style="left:1010.0px;top:70.5px;font-size:13.5px;line-height:18px;color:#2f7d32;">Good</span>
<span class="t" style="left:805.5px;top:96.3px;font-size:13.5px;line-height:18px;color:#b0842a;transform:scaleX(1.061);">Neutra</span>
<span class="t" style="left:907.5px;top:96.3px;font-size:14px;line-height:18px;color:#f0801e;transform:scaleX(1.054);-webkit-text-stroke:0.5px #f0801e;">Calculation</span>
<span class="t" style="left:1010.0px;top:96.3px;font-size:13.5px;line-height:18px;color:#fff;font-weight:700;">Check</span>
<span class="t" style="left:890.0px;top:129.8px;font-size:10.5px;line-height:14px;color:#303030;transform:scaleX(0.839);">Styles</span>
<span class="t" style="left:139.8px;top:154.0px;font-size:13.5px;line-height:18px;color:#555;transform:scaleX(1.009);-webkit-text-stroke:0.25px #555;font-style:italic;font-family:'Liberation Serif',serif;">f</span>
<span class="t" style="left:143.4px;top:159.0px;font-size:9.5px;line-height:12px;color:#555;transform:scaleX(0.996);-webkit-text-stroke:0.25px #555;font-style:italic;font-family:'Liberation Serif',serif;">x</span>
<span class="t" style="left:3.0px;top:184.8px;font-size:11px;line-height:14px;color:#2c2c2c;width:20px;text-align:center;-webkit-text-stroke:0.2px #2c2c2c;">A</span>
<span class="t" style="left:68.0px;top:184.8px;font-size:11px;line-height:14px;color:#2c2c2c;width:20px;text-align:center;-webkit-text-stroke:0.2px #2c2c2c;">B</span>
<span class="t" style="left:134.0px;top:184.8px;font-size:11px;line-height:14px;color:#2c2c2c;width:20px;text-align:center;-webkit-text-stroke:0.2px #2c2c2c;">C</span>
<span class="t" style="left:201.0px;top:184.8px;font-size:11px;line-height:14px;color:#2c2c2c;width:20px;text-align:center;-webkit-text-stroke:0.2px #2c2c2c;">D</span>
<span class="t" style="left:266.0px;top:184.8px;font-size:11px;line-height:14px;color:#2c2c2c;width:20px;text-align:center;-webkit-text-stroke:0.2px #2c2c2c;">E</span>
<span class="t" style="left:333.0px;top:184.8px;font-size:11px;line-height:14px;color:#2c2c2c;width:20px;text-align:center;-webkit-text-stroke:0.2px #2c2c2c;">F</span>
<span class="t" style="left:398.0px;top:184.8px;font-size:11px;line-height:14px;color:#2c2c2c;width:20px;text-align:center;-webkit-text-stroke:0.2px #2c2c2c;">G</span>
<span class="t" style="left:465.0px;top:184.8px;font-size:11px;line-height:14px;color:#2c2c2c;width:20px;text-align:center;-webkit-text-stroke:0.2px #2c2c2c;">H</span>
<span class="t" style="left:532.0px;top:184.8px;font-size:11px;line-height:14px;color:#2c2c2c;width:20px;text-align:center;-webkit-text-stroke:0.2px #2c2c2c;">I</span>
<span class="t" style="left:598.0px;top:184.8px;font-size:11px;line-height:14px;color:#2c2c2c;width:20px;text-align:center;-webkit-text-stroke:0.2px #2c2c2c;">J</span>
<span class="t" style="left:666.0px;top:184.8px;font-size:11px;line-height:14px;color:#2c2c2c;width:20px;text-align:center;-webkit-text-stroke:0.2px #2c2c2c;">K</span>
<span class="t" style="left:731.0px;top:184.8px;font-size:11px;line-height:14px;color:#2c2c2c;width:20px;text-align:center;-webkit-text-stroke:0.2px #2c2c2c;">L</span>
<span class="t" style="left:798.0px;top:184.8px;font-size:11px;line-height:14px;color:#2c2c2c;width:20px;text-align:center;-webkit-text-stroke:0.2px #2c2c2c;">M</span>
<span class="t" style="left:864.0px;top:184.8px;font-size:11px;line-height:14px;color:#2c2c2c;width:20px;text-align:center;-webkit-text-stroke:0.2px #2c2c2c;">N</span>
<span class="t" style="left:931.0px;top:184.8px;font-size:11px;line-height:14px;color:#2c2c2c;width:20px;text-align:center;-webkit-text-stroke:0.2px #2c2c2c;">O</span>
<span class="t" style="left:1019.5px;top:183.8px;font-size:11.5px;line-height:15px;color:#1c1c1c;font-weight:700;">H</span>
<span class="t" style="left:53.7px;top:215.0px;font-size:26px;line-height:34px;color:#0a0a0a;font-weight:700;transform:scaleX(1.037);">Dashboard</span>
<span class="t" style="left:104.5px;top:284.8px;font-size:23px;line-height:30px;color:#fff6ea;transform:scaleX(1.066);-webkit-text-stroke:0.4px currentColor;">REVENUE</span>
<span class="t" style="left:100.0px;top:318.0px;font-size:32px;line-height:42px;color:#fff6ea;transform:scaleX(1.120);-webkit-text-stroke:0.2px currentColor;">$50,000</span>
<span class="t" style="left:357.0px;top:284.8px;font-size:23px;line-height:30px;color:#fdf3f5;transform:scaleX(1.020);-webkit-text-stroke:0.4px currentColor;">EXPENSES</span>
<span class="t" style="left:358.5px;top:318.0px;font-size:32px;line-height:42px;color:#fff;transform:scaleX(1.128);-webkit-text-stroke:0.2px currentColor;">$30,000</span>
<span class="t" style="left:601.0px;top:284.8px;font-size:23px;line-height:30px;color:#f4fbf4;transform:scaleX(1.117);-webkit-text-stroke:0.4px currentColor;">GROWTH</span>
<span class="t" style="left:617.0px;top:318.0px;font-size:32px;line-height:42px;color:#fff;transform:scaleX(1.047);-webkit-text-stroke:0.2px currentColor;">10,0%</span>
<span class="t" style="left:794.0px;top:282.1px;font-size:14.5px;line-height:19px;color:#1a1a1a;font-weight:700;transform:scaleX(1.058);">Month</span>
<span class="t" style="left:804.0px;top:307.5px;font-size:14px;line-height:18px;color:#222;transform:scaleX(0.994);">January</span>
<span class="t" style="left:804.0px;top:333.0px;font-size:14px;line-height:18px;color:#222;transform:scaleX(1.035);">February</span>
<span class="t" style="left:804.0px;top:358.0px;font-size:14px;line-height:18px;color:#222;transform:scaleX(1.077);">May</span>
<span class="t" style="left:804.0px;top:383.3px;font-size:14px;line-height:18px;color:#222;transform:scaleX(1.005);">June</span>
<span class="t" style="left:679.0px;top:405.3px;font-size:14.5px;line-height:19px;color:#1a1a1a;transform:scaleX(1.000);-webkit-text-stroke:0.3px #1a1a1a;">Slicers</span>
<span class="t" style="left:689.0px;top:430.3px;font-size:14px;line-height:18px;color:#222;transform:scaleX(0.980);">Rent</span>
<span class="t" style="left:689.0px;top:454.8px;font-size:14px;line-height:18px;color:#222;transform:scaleX(0.968);">Salaries</span>
<span class="t" style="left:689.0px;top:479.7px;font-size:14px;line-height:18px;color:#222;transform:scaleX(1.082);">Marketing</span>
<span class="t" style="left:689.0px;top:504.5px;font-size:14px;line-height:18px;color:#222;transform:scaleX(1.085);">Other</span>
<span class="t" style="left:128.0px;top:401.2px;font-size:16.5px;line-height:21px;color:#111;transform:scaleX(1.119);-webkit-text-stroke:0.5px #111;">Revenue by Month</span>
<span class="t" style="left:38.0px;top:425.3px;font-size:10.5px;line-height:14px;color:#222;width:50.5px;text-align:right;-webkit-text-stroke:0.15px #222;">30,000</span>
<span class="t" style="left:38.0px;top:448.1px;font-size:10.5px;line-height:14px;color:#222;width:50.5px;text-align:right;-webkit-text-stroke:0.15px #222;">25,000</span>
<span class="t" style="left:38.0px;top:470.8px;font-size:10.5px;line-height:14px;color:#222;width:50.5px;text-align:right;-webkit-text-stroke:0.15px #222;">20,000</span>
<span class="t" style="left:38.0px;top:493.6px;font-size:10.5px;line-height:14px;color:#222;width:50.5px;text-align:right;-webkit-text-stroke:0.15px #222;">15,000</span>
<span class="t" style="left:38.0px;top:516.3px;font-size:10.5px;line-height:14px;color:#222;width:50.5px;text-align:right;-webkit-text-stroke:0.15px #222;">10,000</span>
<span class="t" style="left:38.0px;top:539.0px;font-size:10.5px;line-height:14px;color:#222;width:50.5px;text-align:right;-webkit-text-stroke:0.15px #222;">5,000</span>
<span class="t" style="left:38.0px;top:561.8px;font-size:10.5px;line-height:14px;color:#222;width:50.5px;text-align:right;-webkit-text-stroke:0.15px #222;">0</span>
<span class="t" style="left:100.0px;top:576.5px;font-size:11px;line-height:14px;color:#222;width:40px;text-align:center;-webkit-text-stroke:0.15px #222;">Jan</span>
<span class="t" style="left:140.5px;top:576.5px;font-size:11px;line-height:14px;color:#222;width:40px;text-align:center;-webkit-text-stroke:0.15px #222;">Feb</span>
<span class="t" style="left:181.0px;top:576.5px;font-size:11px;line-height:14px;color:#222;width:40px;text-align:center;-webkit-text-stroke:0.15px #222;">Mar</span>
<span class="t" style="left:223.5px;top:576.5px;font-size:11px;line-height:14px;color:#222;width:40px;text-align:center;-webkit-text-stroke:0.15px #222;">Apr</span>
<span class="t" style="left:267.5px;top:576.5px;font-size:11px;line-height:14px;color:#222;width:40px;text-align:center;-webkit-text-stroke:0.15px #222;">May</span>
<span class="t" style="left:310.0px;top:576.5px;font-size:11px;line-height:14px;color:#222;width:40px;text-align:center;-webkit-text-stroke:0.15px #222;">Jun</span>
<span class="t" style="left:435.5px;top:401.4px;font-size:16.5px;line-height:21px;color:#111;transform:scaleX(1.078);-webkit-text-stroke:0.5px #111;">Revenue vs. Expenses</span>
<span class="t" style="left:376.0px;top:425.1px;font-size:10.5px;line-height:14px;color:#222;width:50.5px;text-align:right;-webkit-text-stroke:0.15px #222;">40,000</span>
<span class="t" style="left:376.0px;top:454.5px;font-size:10.5px;line-height:14px;color:#222;width:50.5px;text-align:right;-webkit-text-stroke:0.15px #222;">20,000</span>
<span class="t" style="left:376.0px;top:483.9px;font-size:10.5px;line-height:14px;color:#222;width:50.5px;text-align:right;-webkit-text-stroke:0.15px #222;">20,000</span>
<span class="t" style="left:376.0px;top:513.3px;font-size:10.5px;line-height:14px;color:#222;width:50.5px;text-align:right;-webkit-text-stroke:0.15px #222;">10,000</span>
<span class="t" style="left:376.0px;top:542.7px;font-size:10.5px;line-height:14px;color:#222;width:50.5px;text-align:right;-webkit-text-stroke:0.15px #222;">0</span>
<span class="t" style="left:430.5px;top:556.3px;font-size:11px;line-height:14px;color:#222;width:40px;text-align:center;-webkit-text-stroke:0.15px #222;">Jan</span>
<span class="t" style="left:474.0px;top:556.3px;font-size:11px;line-height:14px;color:#222;width:40px;text-align:center;-webkit-text-stroke:0.15px #222;">Feb</span>
<span class="t" style="left:517.5px;top:556.3px;font-size:11px;line-height:14px;color:#222;width:40px;text-align:center;-webkit-text-stroke:0.15px #222;">Mar</span>
<span class="t" style="left:560.0px;top:556.3px;font-size:11px;line-height:14px;color:#222;width:40px;text-align:center;-webkit-text-stroke:0.15px #222;">Apr</span>
<span class="t" style="left:602.0px;top:556.3px;font-size:11px;line-height:14px;color:#222;width:40px;text-align:center;-webkit-text-stroke:0.15px #222;">Mun</span>
<span class="t" style="left:584.0px;top:487.0px;font-size:10.5px;line-height:14px;color:#2a2a2a;transform:scaleX(1.023);">Revenue</span>
<span class="t" style="left:584.0px;top:507.0px;font-size:10.5px;line-height:14px;color:#2a2a2a;transform:scaleX(0.997);">Expenses</span>
</div>
</body>
</html>
